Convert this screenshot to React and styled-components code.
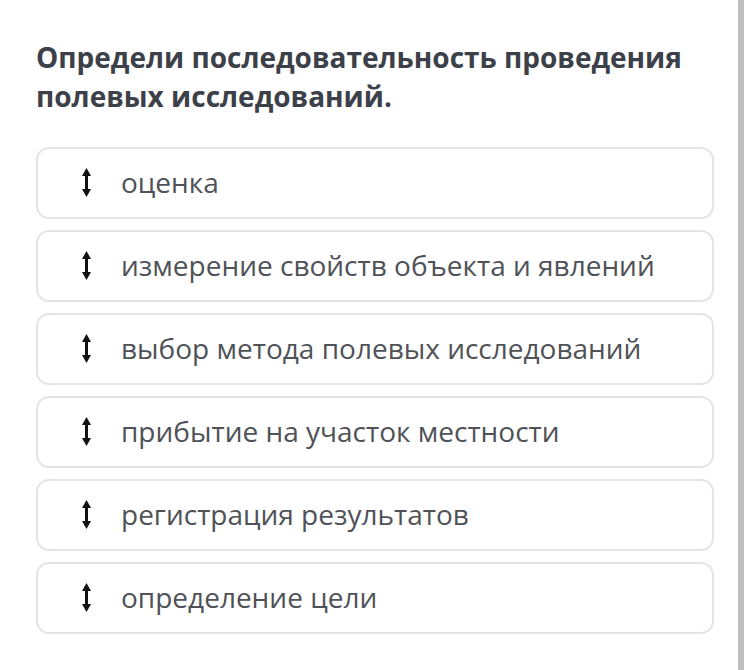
import React from "react";
import styled, { createGlobalStyle } from "styled-components";

const items = [
  "оценка",
  "измерение свойств объекта и явлений",
  "выбор метода полевых исследований",
  "прибытие на участок местности",
  "регистрация результатов",
  "определение цели",
];

const DragIcon = () => (
  <svg width="9" height="29" viewBox="0 0 9 29">
    <path d="M4.5 0 L9 8 L0 8 Z" fill="#111" />
    <rect x="3" y="6" width="3" height="17" fill="#111" />
    <path d="M4.5 29 L9 21 L0 21 Z" fill="#111" />
  </svg>
);

const App = () => {
  return (
    <>
      <GlobalStyle />
      <Page>
        <Content>
          <Title>
            Определи последовательность проведения полевых исследований.
          </Title>
          <List>
            {items.map((text, i) => (
              <Card key={`item_${i}`}>
                <Handle>
                  <DragIcon />
                </Handle>
                <Label>{text}</Label>
              </Card>
            ))}
          </List>
        </Content>
        <Scrollbar />
      </Page>
    </>
  );
};

export default App;

const GlobalStyle = createGlobalStyle`
  html, body {
    margin: 0;
    padding: 0;
    background: #ffffff;
  }
  body {
    font-family: "Open Sans", "Noto Sans", sans-serif;
  }
`;

const Page = styled.div`
  display: flex;
  width: 750px;
  height: 670px;
  overflow: hidden;
`;

const Content = styled.div`
  width: 738px;
  padding: 38px 0 0 36px;
  box-sizing: border-box;
`;

const Scrollbar = styled.div`
  width: 6px;
  height: 100%;
  background: #c0c0c0;
`;

const Title = styled.h1`
  margin: 0 0 31px 0;
  width: 680px;
  font-size: 28px;
  line-height: 39px;
  font-weight: 700;
  color: #3c4049;
`;

const List = styled.div`
  display: flex;
  flex-direction: column;
  gap: 11px;
  width: 678px;
`;

const Card = styled.div`
  display: flex;
  align-items: center;
  height: 72px;
  box-sizing: border-box;
  border: 2px solid #e4e4e4;
  border-radius: 13px;
  padding: 0 0 2px 44px;
`;

const Handle = styled.div`
  display: flex;
  width: 9px;
  margin-right: 30px;
`;

const Label = styled.span`
  font-size: 28px;
  color: #4f5257;
`;
